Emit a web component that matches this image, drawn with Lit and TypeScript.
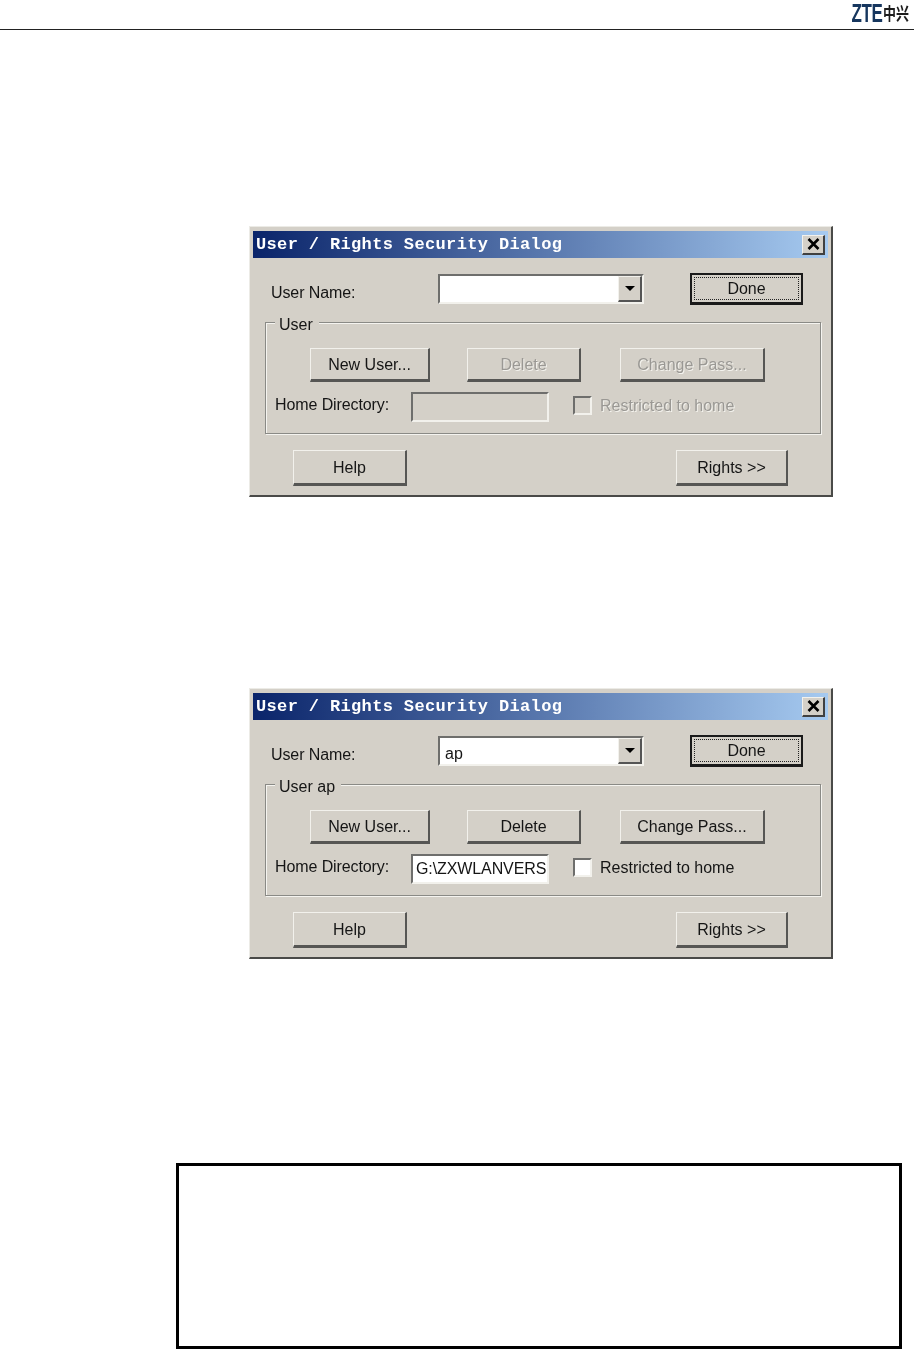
import { LitElement, html, css, svg } from "lit";
import { customElement, property } from "lit/decorators.js";

@customElement("security-dialog")
class SecurityDialog extends LitElement {
  @property() user = "";
  @property({ type: Boolean }) active = false;

  static styles = css`
    :host { display: block; }
    .dialog {
      box-sizing: border-box;
      width: 584px;
      height: 271px;
      padding: 4px 3px 4px 3px;
      background: #d4d0c8;
      border-style: solid;
      border-width: 1px 2px 2px 1px;
      border-color: #ecebe6 #4a4a48 #4a4a48 #ecebe6;
      font: 16px/20px "Liberation Sans", Arial, sans-serif;
      letter-spacing: 0;
      color: #151515;
      filter: blur(0.4px);
    }
    .title {
      height: 27px;
      display: flex;
      align-items: center;
      justify-content: space-between;
      padding: 0 3px;
      background: linear-gradient(90deg, #0a246a, #a6caf0);
    }
    .title-text {
      font: bold 17px/27px "Liberation Mono", monospace;
      letter-spacing: 0.36px;
      color: #fff;
    }
    .close {
      box-sizing: border-box;
      width: 23px;
      height: 20px;
      display: flex;
      align-items: center;
      justify-content: center;
      background: #d4d0c8;
      border-style: solid;
      border-width: 1px 2px 2px 1px;
      border-color: #f2f1ec #404040 #404040 #f2f1ec;
    }
    .top-row {
      display: flex;
      align-items: center;
      height: 32px;
      margin-top: 15px;
      padding-left: 18px;
    }
    .name-label { width: 167px; margin-top: 8px; letter-spacing: -0.1px; }
    .combo {
      box-sizing: border-box;
      width: 206px;
      height: 30px;
      display: flex;
      align-items: center;
      justify-content: space-between;
      padding-left: 5px;
      background: #fff;
      border-style: solid;
      border-width: 2px;
      border-color: #6e6e6c #f2f1ec #f2f1ec #6e6e6c;
    }
    .combo-value { margin-top: 6px; }
    .arrow-btn {
      box-sizing: border-box;
      width: 24px;
      height: 26px;
      display: flex;
      align-items: center;
      justify-content: center;
      background: #d4d0c8;
      border-style: solid;
      border-width: 1px 2px 2px 1px;
      border-color: #f2f1ec #555 #555 #f2f1ec;
    }
    .arrow {
      width: 0;
      height: 0;
      border-style: solid;
      border-width: 5px 5.5px 0 5.5px;
      border-color: #000 transparent transparent transparent;
    }
    .btn {
      box-sizing: border-box;
      display: flex;
      align-items: center;
      justify-content: center;
      padding-top: 1px;
      background: #d4d0c8;
      border-style: solid;
      border-width: 1px 2px 3px 1px;
      border-color: #f2f1ec #565654 #565654 #f2f1ec;
      white-space: nowrap;
    }
    .done {
      width: 113px;
      height: 32px;
      margin-left: 46px;
      padding: 2px;
      border: 2px solid #1a1a1a;
      border-bottom-width: 3px;
    }
    .focus {
      box-sizing: border-box;
      width: 100%;
      height: 100%;
      display: flex;
      align-items: center;
      justify-content: center;
      border: 1px dotted #222;
    }
    .group {
      position: relative;
      box-sizing: border-box;
      width: 556px;
      height: 112px;
      margin: 17px 0 0 12px;
      padding: 25px 0 0 44px;
      border: 1px solid #8a8a86;
      box-shadow: 1px 1px 0 #f5f4f0, inset 1px 1px 0 #f5f4f0;
    }
    .legend {
      position: absolute;
      left: 9px;
      top: -8px;
      padding: 0 6px 0 4px;
      background: #d4d0c8;
    }
    .btn-row { display: flex; height: 34px; }
    .new-user { width: 120px; }
    .delete { width: 114px; margin-left: 37px; }
    .change { width: 145px; margin-left: 39px; }
    .home-row {
      display: flex;
      align-items: center;
      height: 30px;
      margin: 10px 0 0 -35px;
    }
    .home-label { width: 136px; margin-top: -4px; letter-spacing: -0.1px; }
    .home-input {
      box-sizing: border-box;
      width: 138px;
      height: 30px;
      padding-left: 3px;
      white-space: nowrap;
      line-height: 26px;
      letter-spacing: -0.1px;
      border-style: solid;
      border-width: 2px;
      border-color: #6e6e6c #f2f1ec #f2f1ec #6e6e6c;
      background: #fff;
    }
    .off .home-input { background: #d4d0c8; }
    .check {
      box-sizing: border-box;
      width: 19px;
      height: 19px;
      margin: -4px 8px 0 24px;
      background: #fff;
      border-style: solid;
      border-width: 2px;
      border-color: #6e6e6c #f2f1ec #f2f1ec #6e6e6c;
    }
    .off .check { background: #d4d0c8; }
    .check-label { margin-top: -2px; }
    .bottom-row {
      display: flex;
      height: 36px;
      margin: 16px 0 0 40px;
    }
    .help { width: 114px; }
    .rights { width: 112px; margin-left: 269px; }
    .dim { color: #9a9894; text-shadow: 1px 1px 0 #f4f3ee; }
  `;

  render() {
    const dim = this.active ? "" : "dim";
    return html`
      <div class="dialog ${this.active ? "" : "off"}">
        <div class="title">
          <span class="title-text">User / Rights Security Dialog</span>
          <span class="close">
            <svg width="13" height="12" viewBox="0 0 13 12">
              ${svg`<path d="M1.5 1 L11.5 11 M11.5 1 L1.5 11" stroke="#000" stroke-width="2.6" fill="none"/>`}
            </svg>
          </span>
        </div>
        <div class="top-row">
          <span class="name-label">User Name:</span>
          <div class="combo">
            <span class="combo-value">${this.user}</span>
            <span class="arrow-btn"><span class="arrow"></span></span>
          </div>
          <div class="btn done"><div class="focus">Done</div></div>
        </div>
        <div class="group">
          <span class="legend">User${this.user ? " " + this.user : ""}</span>
          <div class="btn-row">
            <div class="btn new-user">New User...</div>
            <div class="btn delete ${dim}">Delete</div>
            <div class="btn change ${dim}">Change Pass...</div>
          </div>
          <div class="home-row">
            <span class="home-label">Home Directory:</span>
            <div class="home-input">${this.active ? "G:\\ZXWLANVERS" : ""}</div>
            <span class="check"></span>
            <span class="check-label ${dim}">Restricted to home</span>
          </div>
        </div>
        <div class="bottom-row">
          <div class="btn help">Help</div>
          <div class="btn rights">Rights &gt;&gt;</div>
        </div>
      </div>
    `;
  }
}

@customElement("app-root")
class AppRoot extends LitElement {
  static styles = css`
    :host {
      display: block;
      width: 914px;
      height: 1349px;
      overflow: hidden;
      background: #fff;
    }
    .header {
      box-sizing: border-box;
      height: 30px;
      display: flex;
      justify-content: flex-end;
      align-items: center;
      padding: 0 5px 4px 0;
      border-bottom: 1px solid #222;
    }
    .zte {
      font: bold 25px/24px "Liberation Sans", Arial, sans-serif;
      color: #16365e;
      letter-spacing: -0.6px;
      display: inline-block;
      transform: scaleX(0.68);
      transform-origin: right center;
      margin-right: 1px;
      filter: blur(0.4px);
    }
    .cn {
      font: bold 13px/24px "Noto Sans CJK SC", sans-serif;
      color: #1c1c1c;
      display: inline-block;
      transform: scaleY(1.35);
      filter: blur(0.3px);
    }
    .d1 { margin: 196px 0 0 249px; width: 584px; }
    .d2 { margin: 191px 0 0 249px; width: 584px; }
    .box {
      box-sizing: border-box;
      width: 726px;
      height: 186px;
      margin: 204px 0 0 176px;
      border: 3px solid #000;
    }
  `;

  render() {
    return html`
      <div class="header">
        <span class="zte">ZTE</span><span class="cn">中兴</span>
      </div>
      <security-dialog class="d1"></security-dialog>
      <security-dialog class="d2" user="ap" active></security-dialog>
      <div class="box"></div>
    `;
  }
}
